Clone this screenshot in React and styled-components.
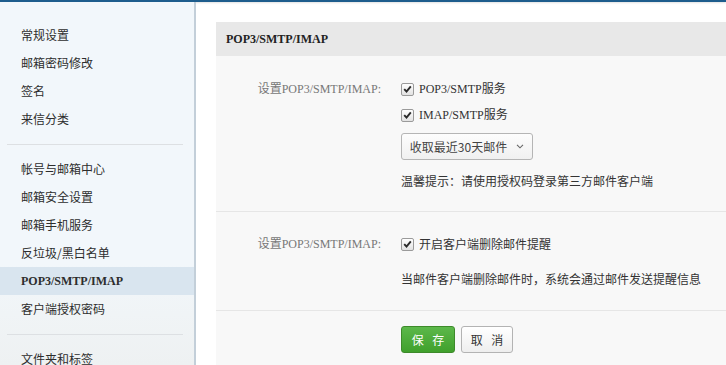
import styled, { createGlobalStyle } from "styled-components"

const Global = createGlobalStyle`
  html, body { margin: 0; padding: 0; }
  body {
    width: 726px;
    height: 365px;
    overflow: hidden;
    background: #ffffff;
    font-family: "Liberation Serif", "Noto Sans CJK SC", serif;
    font-size: 12px;
    color: #333333;
  }
`

const menuTop = ["常规设置", "邮箱密码修改", "签名", "来信分类"]
const menuMid = ["帐号与邮箱中心", "邮箱安全设置", "邮箱手机服务", "反垃圾/黑白名单", "POP3/SMTP/IMAP", "客户端授权密码"]
const menuBottom = ["文件夹和标签"]

export default function App() {
  return (
    <>
      <Global />
      <Pagina>
        <TopoLinha />
        <Corpo>
          <Lateral>
            <Grupo>
              {menuTop.map((item) => <ItemMenu key={item}>{item}</ItemMenu>)}
            </Grupo>
            <Separador />
            <Grupo>
              {menuMid.map((item) => (
                <ItemMenu key={item} ativo={item === "POP3/SMTP/IMAP"}>{item}</ItemMenu>
              ))}
            </Grupo>
            <Separador />
            <Grupo>
              {menuBottom.map((item) => <ItemMenu key={item}>{item}</ItemMenu>)}
            </Grupo>
          </Lateral>
          <Conteudo>
            <Painel>
              <Cabecalho>POP3/SMTP/IMAP</Cabecalho>
              <Secao topo="23px" fundo="21px">
                <Linha>
                  <Rotulo>设置POP3/SMTP/IMAP:</Rotulo>
                  <Campos>
                    <Opcao><Caixa /><span>POP3/SMTP服务</span></Opcao>
                    <Opcao espaco="6px"><Caixa /><span>IMAP/SMTP服务</span></Opcao>
                    <Seletor>
                      收取最近30天邮件
                      <svg width="8" height="5" viewBox="0 0 8 5">
                        <path d="M1 0.8 L4 3.8 L7 0.8" fill="none" stroke="#666" strokeWidth="1.1" />
                      </svg>
                    </Seletor>
                    <Dica espaco="12px">温馨提示：请使用授权码登录第三方邮件客户端</Dica>
                  </Campos>
                </Linha>
              </Secao>
              <Secao topo="22px" fundo="22px">
                <Linha>
                  <Rotulo>设置POP3/SMTP/IMAP:</Rotulo>
                  <Campos>
                    <Opcao><Caixa /><Sans>开启客户端删除邮件提醒</Sans></Opcao>
                    <Dica espaco="16px">当邮件客户端删除邮件时，系统会通过邮件发送提醒信息</Dica>
                  </Campos>
                </Linha>
              </Secao>
              <Acoes>
                <Botao primario>保 存</Botao>
                <Botao>取 消</Botao>
              </Acoes>
            </Painel>
          </Conteudo>
        </Corpo>
      </Pagina>
    </>
  )
}

function Caixa() {
  return (
    <CheckBox>
      <svg width="9" height="8" viewBox="0 0 9 8">
        <path d="M1.2 4.2 L3.5 6.5 L7.8 1.3" fill="none" stroke="#2b2b2b" strokeWidth="1.9" />
      </svg>
    </CheckBox>
  )
}

const Pagina = styled.div`
  width: 726px;
  height: 365px;
  display: flex;
  flex-direction: column;
  overflow: hidden;
`

const TopoLinha = styled.div`
  height: 2px;
  background: #1e5d8d;
  box-shadow: 0 1px 2px rgba(0, 0, 0, 0.12);
  flex-shrink: 0;
`

const Corpo = styled.div`
  flex: 1;
  display: flex;
  min-height: 0;
`

const Lateral = styled.div`
  width: 194px;
  flex-shrink: 0;
  border-right: 2px solid #c3cfd9;
  background: linear-gradient(180deg, #f2f7fb 0%, #f2f7fb 72%, #f0f4f6 86%, #eef1f2 100%);
  padding-top: 19px;
`

const Grupo = styled.div`
  display: flex;
  flex-direction: column;
`

const ItemMenu = styled.div`
  height: 28px;
  line-height: 28px;
  padding-left: 21px;
  font-family: ${(props) => props.ativo ? '"Liberation Serif", "Noto Sans CJK SC", serif' : '"Noto Sans CJK SC", sans-serif'};
  font-weight: ${(props) => props.ativo ? 700 : 400};
  font-size: 12px;
  color: #2d2d2d;
  background: ${(props) => props.ativo ? "#d9e5ef" : "transparent"};
`

const Separador = styled.div`
  height: 1px;
  background: #dde0e3;
  margin: 11px 11px 10px 7px;
`

const Conteudo = styled.div`
  flex: 1;
  padding: 20px 0 0 20px;
  min-width: 0;
`

const Painel = styled.div`
  width: 560px;
  background: #f8f8f8;
`

const Cabecalho = styled.div`
  height: 34px;
  line-height: 34px;
  background: #e8e8e8;
  padding-left: 10px;
  font-weight: 700;
  font-size: 12px;
  color: #222222;
`

const Secao = styled.div`
  border-bottom: 1px solid #e6e6e6;
  padding: ${(props) => props.topo} 0 ${(props) => props.fundo};
`

const Linha = styled.div`
  display: flex;
  align-items: flex-start;
`

const Rotulo = styled.div`
  width: 165px;
  text-align: right;
  color: #777777;
  font-size: 12px;
  line-height: 20px;
  padding-right: 20px;
`

const Campos = styled.div`
  display: flex;
  flex-direction: column;
  align-items: flex-start;
`

const Opcao = styled.label`
  display: flex;
  align-items: center;
  gap: 5px;
  height: 20px;
  line-height: 20px;
  margin-top: ${(props) => props.espaco || "0"};
  color: #333333;
  font-size: 12px;
`

const Sans = styled.span`
  font-family: "Noto Sans CJK SC", sans-serif;
`

const CheckBox = styled.span`
  width: 11px;
  height: 11px;
  border: 1px solid #9a9a9a;
  border-radius: 2px;
  background: linear-gradient(#ffffff, #e2e2e2);
  display: flex;
  align-items: center;
  justify-content: center;
`

const Seletor = styled.div`
  margin-top: 8px;
  height: 27px;
  width: 132px;
  box-sizing: border-box;
  border: 1px solid #b5b5b5;
  border-radius: 3px;
  background: linear-gradient(#fdfdfd, #f0f0f0);
  display: flex;
  align-items: center;
  justify-content: center;
  gap: 9px;
  font-family: "Noto Sans CJK SC", sans-serif;
  font-size: 12px;
  color: #444444;
`

const Dica = styled.div`
  margin-top: ${(props) => props.espaco || "8px"};
  line-height: 18px;
  font-family: "Noto Sans CJK SC", sans-serif;
  font-size: 12px;
  color: #333333;
`

const Acoes = styled.div`
  display: flex;
  gap: 6px;
  padding: 15px 0 20px 185px;
`

const Botao = styled.button`
  height: 27px;
  width: ${(props) => props.primario ? "54px" : "52px"};
  border-radius: 3px;
  border: 1px solid ${(props) => props.primario ? "#3d8a2a" : "#b3b3b3"};
  background: ${(props) => props.primario ? "linear-gradient(#5cb84a, #40a02c)" : "linear-gradient(#ffffff, #eeeeee)"};
  color: ${(props) => props.primario ? "#ffffff" : "#333333"};
  font-family: "Noto Sans CJK SC", sans-serif;
  font-size: 12px;
  letter-spacing: 3px;
  padding: 0 0 0 3px;
`
